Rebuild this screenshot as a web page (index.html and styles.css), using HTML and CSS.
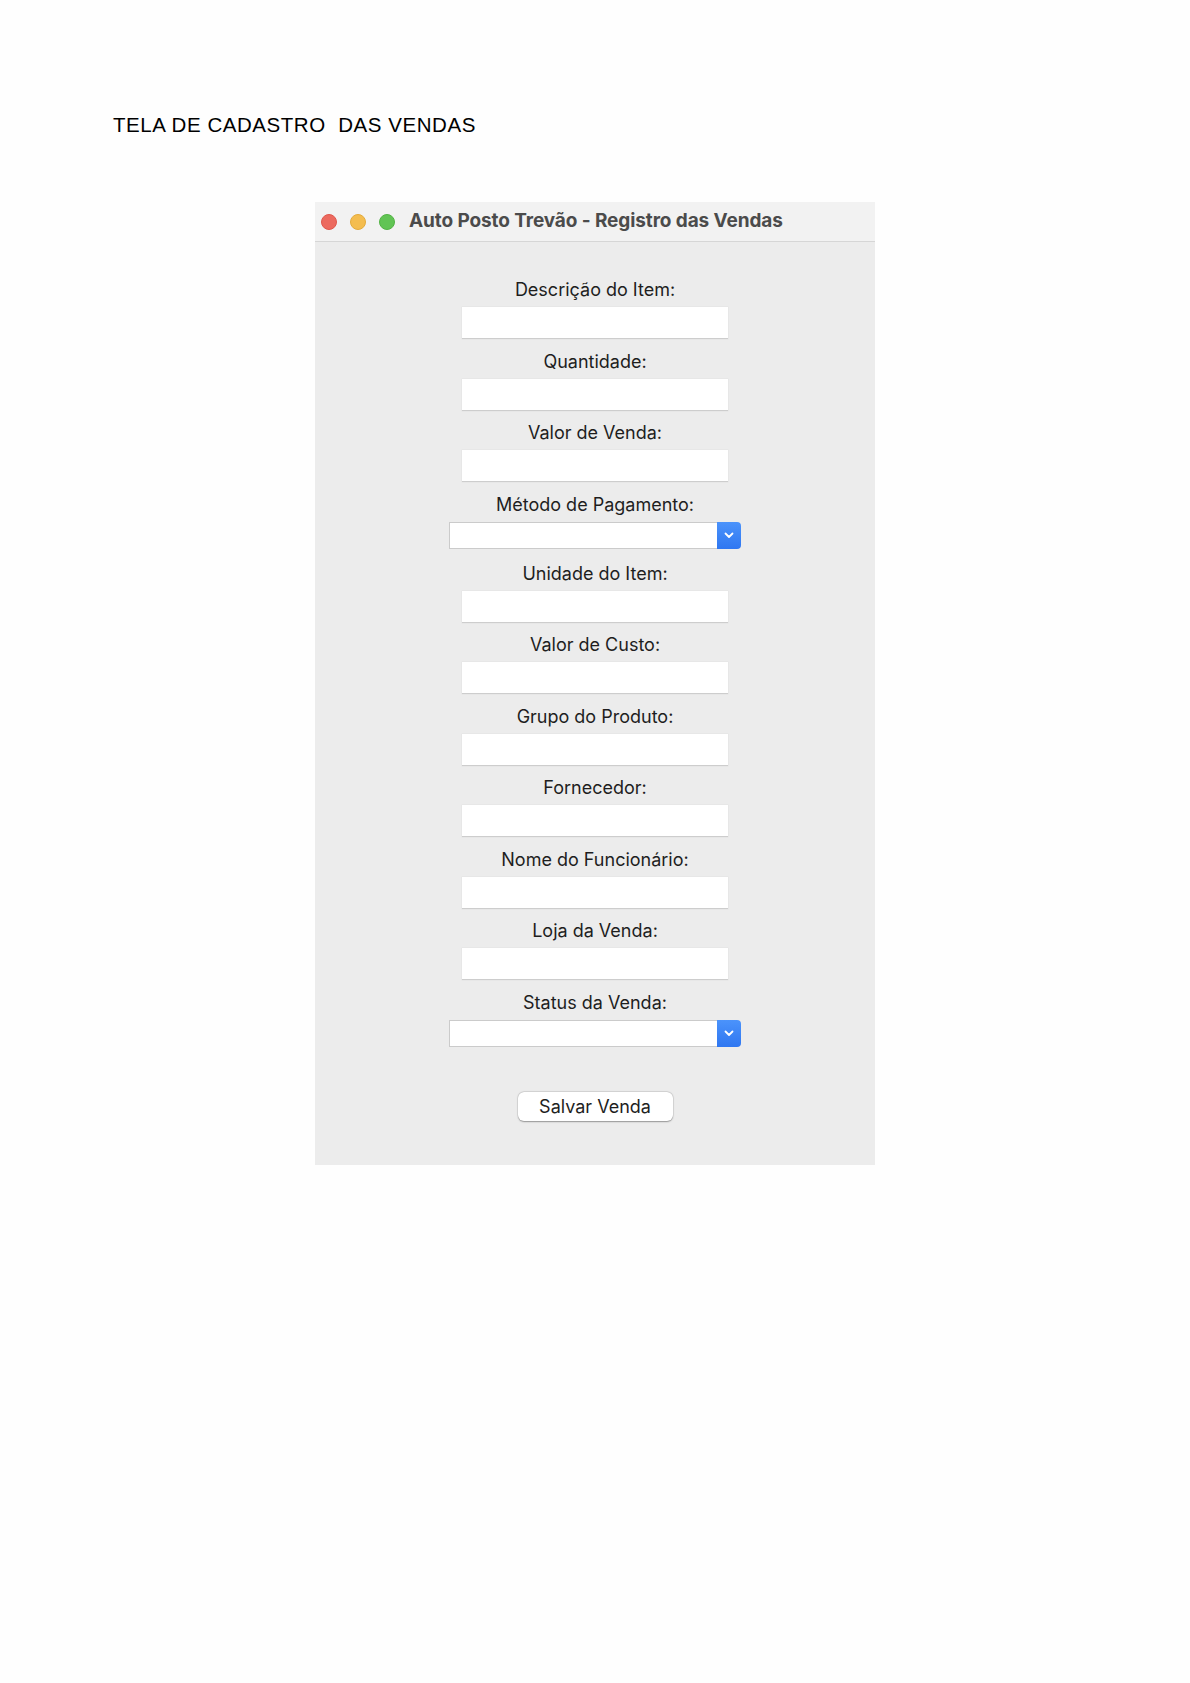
FILE: index.html
```html
<!DOCTYPE html>
<html lang="pt-BR">
<head>
<meta charset="utf-8">
<title>Tela de Cadastro das Vendas</title>
<link rel="stylesheet" href="styles.css">
</head>
<body>
<div class="page">
  <h1 class="doc-title">TELA DE CADASTRO&nbsp; DAS VENDAS</h1>
  <div class="window">
    <div class="titlebar">
      <span class="light red"></span>
      <span class="light yellow"></span>
      <span class="light green"></span>
      <span class="win-title">Auto Posto Trevão - Registro das Vendas</span>
    </div>
    <form class="form">
      <label class="lbl">Descrição do Item:</label>
      <div class="field"></div>
      <label class="lbl">Quantidade:</label>
      <div class="field"></div>
      <label class="lbl">Valor de Venda:</label>
      <div class="field"></div>
      <label class="lbl">Método de Pagamento:</label>
      <div class="select"><span class="sel-box"></span><span class="sel-btn"><svg width="10" height="7" viewBox="0 0 10 7"><path d="M1.5 1.5 L5 5 L8.5 1.5" fill="none" stroke="#fff" stroke-width="1.8" stroke-linecap="round" stroke-linejoin="round"/></svg></span></div>
      <label class="lbl">Unidade do Item:</label>
      <div class="field"></div>
      <label class="lbl">Valor de Custo:</label>
      <div class="field"></div>
      <label class="lbl">Grupo do Produto:</label>
      <div class="field"></div>
      <label class="lbl">Fornecedor:</label>
      <div class="field"></div>
      <label class="lbl">Nome do Funcionário:</label>
      <div class="field"></div>
      <label class="lbl">Loja da Venda:</label>
      <div class="field"></div>
      <label class="lbl">Status da Venda:</label>
      <div class="select"><span class="sel-box"></span><span class="sel-btn"><svg width="10" height="7" viewBox="0 0 10 7"><path d="M1.5 1.5 L5 5 L8.5 1.5" fill="none" stroke="#fff" stroke-width="1.8" stroke-linecap="round" stroke-linejoin="round"/></svg></span></div>
      <div class="btn">Salvar Venda</div>
    </form>
  </div>
</div>
</body>
</html>
```
FILE: styles.css
```css
html, body {
  margin: 0;
  padding: 0;
  background: #fefefe;
}
.page {
  padding-top: 114px;
}
.doc-title {
  margin: 0 0 66px 113px;
  font-family: "Liberation Sans", Arial, sans-serif;
  font-weight: normal;
  font-size: 20.5px;
  line-height: 22px;
  color: #000;
  letter-spacing: 0.55px;
}
.window {
  width: 560px;
  margin: 0 auto;
  background: #ececec;
  font-family: "Inter", "Open Sans", sans-serif;
}
.titlebar {
  height: 39px;
  background: #f2f2f2;
  border-bottom: 1px solid #d6d6d6;
  display: flex;
  align-items: center;
  padding-left: 6px;
}
.light {
  width: 16px;
  height: 16px;
  border-radius: 50%;
  margin-right: 13px;
  box-sizing: border-box;
}
.red { background: #ec6a5f; border: 1px solid #e0574c; }
.yellow { background: #f4bd4f; border: 1px solid #e3ab3c; }
.green { background: #61c454; border: 1px solid #52b344; }
.win-title {
  margin-left: 1px;
  margin-bottom: 3px;
  font-size: 19px;
  font-weight: 700;
  color: #4b4b4b;
  letter-spacing: -0.1px;
}
.form {
  display: flex;
  flex-direction: column;
  align-items: center;
  padding: 37px 0 44px;
  margin: 0;
}
.lbl {
  font-size: 18px;
  line-height: 22px;
  color: #1e1e1e;
  margin-bottom: 6px;
}
.field {
  width: 266px;
  height: 31px;
  background: #fff;
  border-bottom: 1px solid #cdcdcd;
  box-shadow: 0 0 0 0.5px #e2e2e2;
  margin-bottom: 11.5px;
}
.select {
  display: flex;
  width: 292px;
  height: 27px;
  margin-bottom: 14px;
}
.sel-box {
  flex: 1;
  background: #fff;
  border: 1px solid #cbcbcb;
  border-right: none;
}
.sel-btn {
  width: 24px;
  background: linear-gradient(#4b93fb, #2f77f1);
  border-radius: 0 4px 4px 0;
  display: flex;
  align-items: center;
  justify-content: center;
}
.btn {
  margin-top: 31px;
  width: 155px;
  height: 29px;
  box-sizing: border-box;
  background: #fff;
  border-radius: 6px;
  box-shadow: 0 0.5px 1.5px rgba(0,0,0,0.35), 0 0 0 0.5px rgba(0,0,0,0.08);
  display: flex;
  align-items: center;
  justify-content: center;
  font-size: 18px;
  color: #1e1e1e;
}
```
